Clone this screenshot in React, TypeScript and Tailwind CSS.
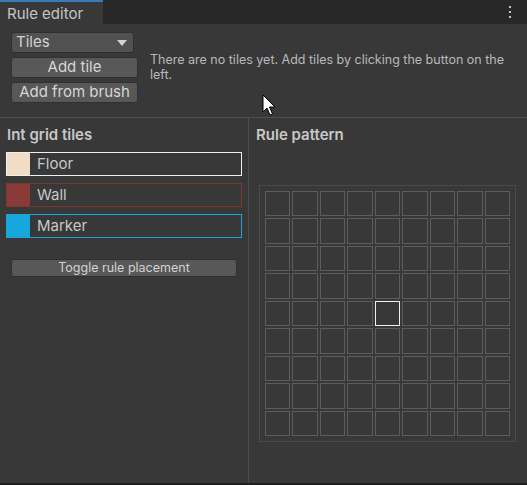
import React from "react";

const tiles = [
  { name: "Floor", swatch: "bg-[#f1dcc6]", border: "border-[#f0f0f0]" },
  { name: "Wall", swatch: "bg-[#8b3b37]", border: "border-[#7c3733]" },
  { name: "Marker", swatch: "bg-[#16a7dc]", border: "border-[#1ea3d4]" },
];

export default function App() {
  const cells = Array.from({ length: 81 }, (_, i) => i);
  return (
    <div
      className="relative w-[527px] h-[485px] bg-[#383838] flex flex-col overflow-hidden"
      style={{ fontFamily: "Inter, 'Noto Sans', sans-serif" }}
    >
      {/* tab bar */}
      <div className="h-[24px] bg-[#282828] flex items-stretch justify-between shrink-0">
        <div className="w-[103px] bg-[#383838] border-t-2 border-[#3a79bb] flex items-center pl-[7px] text-[15px] text-[#c4c4c4] leading-none">
          Rule editor
        </div>
        <div className="flex flex-col items-center justify-center gap-[2.5px] pr-[16px]">
          <span className="w-[2.5px] h-[2.5px] bg-[#c4c4c4]" />
          <span className="w-[2.5px] h-[2.5px] bg-[#c4c4c4]" />
          <span className="w-[2.5px] h-[2.5px] bg-[#c4c4c4]" />
        </div>
      </div>

      {/* top section */}
      <div className="h-[94px] shrink-0 flex items-start border-b border-[#4d4d4d] pl-[11px] pt-[8px]">
        <div className="flex flex-col gap-[4px] w-[127px] shrink-0">
          <div className="w-[123px] h-[21px] rounded-[3px] bg-[#515151] border border-[#2f2f2f] flex items-center justify-between pl-[4px] pr-[6px] text-[15px] text-[#d2d2d2]">
            <span>Tiles</span>
            <svg width="10" height="6" viewBox="0 0 10 6">
              <path d="M0 0 L10 0 L5 6 Z" fill="#d2d2d2" />
            </svg>
          </div>
          <div className="h-[21px] rounded-[3px] bg-[#585858] border border-[#303030] flex items-center justify-center text-[15px] text-[#d6d6d6]">
            Add tile
          </div>
          <div className="h-[21px] rounded-[3px] bg-[#585858] border border-[#303030] flex items-center justify-center text-[15px] text-[#d6d6d6]">
            Add from brush
          </div>
        </div>
        <p className="ml-[12px] mt-[20px] w-[362px] text-[12.5px] leading-[15px] text-[#b8b8b8]">
          There are no tiles yet. Add tiles by clicking the button on the left.
        </p>
      </div>

      {/* bottom section */}
      <div className="flex-1 flex">
        <div className="w-[249px] shrink-0 border-r border-[#4d4d4d] pl-[6px] pt-[7px]">
          <div className="pl-[1px] text-[15px] font-semibold text-[#c8c8c8] leading-[20px]">
            Int grid tiles
          </div>
          <div className="mt-[7px] flex flex-col gap-[7px] w-[236px]">
            {tiles.map((t) => (
              <div key={t.name} className={`h-[24px] border ${t.border} flex items-stretch`}>
                <div className={`w-[23px] ${t.swatch}`} />
                <div className="flex items-center pl-[7px] text-[15px] text-[#c8c8c8]">
                  {t.name}
                </div>
              </div>
            ))}
          </div>
          <div className="mt-[21px] ml-[5px] w-[226px] h-[18px] rounded-[3px] bg-[#585858] border border-[#303030] flex items-center justify-center text-[12.5px] text-[#d2d2d2]">
            Toggle rule placement
          </div>
        </div>
        <div className="flex-1 pt-[7px] pl-[7px]">
          <div className="text-[15px] font-semibold text-[#c8c8c8] leading-[20px]">
            Rule pattern
          </div>
          <div className="mt-[40px] ml-[3px] w-[257px] h-[257px] border border-[#4a4a4a] p-[5px]">
            <div className="grid grid-cols-9 grid-rows-9 gap-[2px] w-[245px] h-[245px]">
              {cells.map((i) => (
                <div
                  key={i}
                  className={
                    i === 40
                      ? "border-[1.5px] border-[#f0f0f0]"
                      : "border-[1.5px] border-[#5c5c5c]"
                  }
                />
              ))}
            </div>
          </div>
        </div>
      </div>
      <div className="h-[2px] bg-[#1e1e1e] shrink-0" />

      {/* mouse cursor */}
      <svg
        className="absolute left-[262px] top-[94px]"
        width="15"
        height="24"
        viewBox="0 0 15 24"
      >
        <path
          d="M1 1 L1 18 L5 14 L8 21 L10.5 20 L7.5 13 L13 13 Z"
          fill="#ffffff"
          stroke="#000000"
          strokeWidth="1"
          strokeLinejoin="miter"
        />
      </svg>
    </div>
  );
}
